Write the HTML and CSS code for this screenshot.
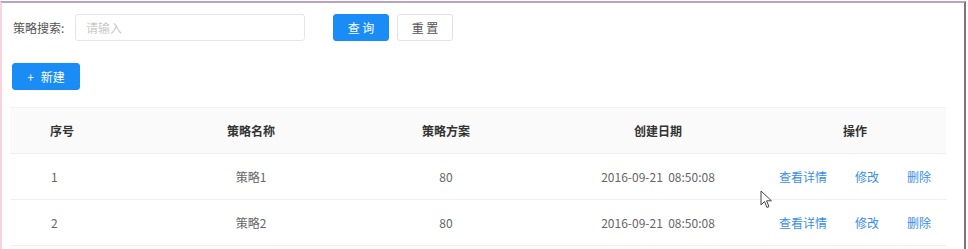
FILE: index.html
```html
<!DOCTYPE html>
<html lang="zh-CN">
<head>
    <meta charset="UTF-8">
    <title>策略管理</title>
    <link rel="stylesheet" href="styles.css">
</head>
<body>
    <div class="frame">
        <!-- search bar -->
        <div class="search-row">
            <label class="search-label" for="kw">策略搜索:</label>
            <input class="search-input" id="kw" type="text" placeholder="请输入">
            <button class="btn btn-primary btn-query">查 询</button>
            <button class="btn btn-default">重 置</button>
        </div>

        <div class="tool-row">
            <button class="btn btn-primary btn-new"><span class="plus">+</span>新建</button>
        </div>

        <!-- list -->
        <table class="list">
            <colgroup>
                <col class="c1"><col class="c2"><col class="c3"><col class="c4"><col class="c5">
            </colgroup>
            <thead>
                <tr>
                    <th class="col-no">序号</th>
                    <th>策略名称</th>
                    <th>策略方案</th>
                    <th>创建日期</th>
                    <th class="col-op">操作</th>
                </tr>
            </thead>
            <tbody>
                <tr>
                    <td class="col-no">1</td>
                    <td>策略1</td>
                    <td>80</td>
                    <td>2016-09-21&nbsp;&nbsp;08:50:08</td>
                    <td class="col-op"><a href="#">查看详情</a><a href="#">修改</a><a href="#">删除</a></td>
                </tr>
                <tr>
                    <td class="col-no">2</td>
                    <td>策略2</td>
                    <td>80</td>
                    <td>2016-09-21&nbsp;&nbsp;08:50:08</td>
                    <td class="col-op"><a href="#">查看详情</a><a href="#">修改</a><a href="#">删除</a></td>
                </tr>
            </tbody>
        </table>

        <!-- mouse pointer -->
        <svg class="cursor" width="13" height="20" viewBox="0 0 13 20">
            <path d="M1 1 L1 15 L4.5 11.5 L7 17.5 L9 16.6 L6.6 10.8 L11.5 10.8 Z" fill="#fff" stroke="#444" stroke-width="1" stroke-linejoin="round"/>
        </svg>
    </div>
</body>
</html>
```

FILE: styles.css
```css
/* page frame */
body {
    margin: 0;
    font-family: "Noto Sans CJK SC", "Noto Sans", sans-serif;
    font-size: 12px;
    color: #666;
    background: #fff;
}

.frame {
    position: relative;
    width: 954px;
    height: 246px;
    margin-top: 1px;
    padding: 11px 0 0 8px;
    border-top: 2px solid #b9a2c2;
    border-left: 2px solid #f7d5de;
    border-right: 2px solid #8e6b82;
    box-sizing: content-box;
    overflow: hidden;
}

/* search row */
.search-row {
    display: flex;
    align-items: center;
    height: 27px;
}

.search-label {
    margin-left: 3px;
    width: 62px;
    color: #555;
}

.search-input {
    width: 230px;
    height: 27px;
    box-sizing: border-box;
    padding: 0 10px;
    border: 1px solid #e6e6e6;
    border-radius: 3px;
    font-family: inherit;
    font-size: 12px;
    outline: none;
}

.search-input::placeholder {
    color: #c8c8c8;
}

.btn {
    height: 27px;
    border-radius: 3px;
    font-family: inherit;
    font-size: 12px;
    padding: 0;
    cursor: pointer;
}

.btn-primary {
    background-color: #1a8cf5;
    border: 1px solid #1a8cf5;
    color: #fff;
}

.btn-default {
    width: 56px;
    margin-left: 8px;
    background-color: #fff;
    border: 1px solid #e3e3e3;
    color: #555;
}

.btn-query {
    width: 56px;
    margin-left: 28px;
}

/* new button */
.tool-row {
    margin-top: 22px;
    height: 27px;
}

.btn-new {
    width: 68px;
    margin-left: 2px;
}

.btn-new .plus {
    margin-right: 7px;
}

/* table */
.list {
    width: 936px;
    margin-top: 17px;
    border-collapse: collapse;
    table-layout: fixed;
}

.list col.c1 { width: 146px; }
.list col.c2 { width: 190px; }
.list col.c3 { width: 200px; }
.list col.c4 { width: 224px; }
.list col.c5 { width: 176px; }

.list th,
.list td {
    height: 45px;
    padding: 0;
    text-align: center;
    white-space: nowrap;
    border-bottom: 1px solid #efefef;
}

.list th {
    background-color: #fafafa;
    color: #333;
    font-weight: bold;
    border-top: 1px solid #f2f2f2;
}

.list .col-no {
    text-align: left;
    padding-left: 40px;
}

.list .col-op {
    padding-right: 6px;
}

.list td.col-no {
    padding-left: 41px;
}

.list a {
    color: #3a8ee6;
    text-decoration: none;
    margin-left: 28px;
}

.list a:first-child {
    margin-left: 0;
}

.cursor {
    position: absolute;
    left: 758px;
    top: 187px;
}
```
